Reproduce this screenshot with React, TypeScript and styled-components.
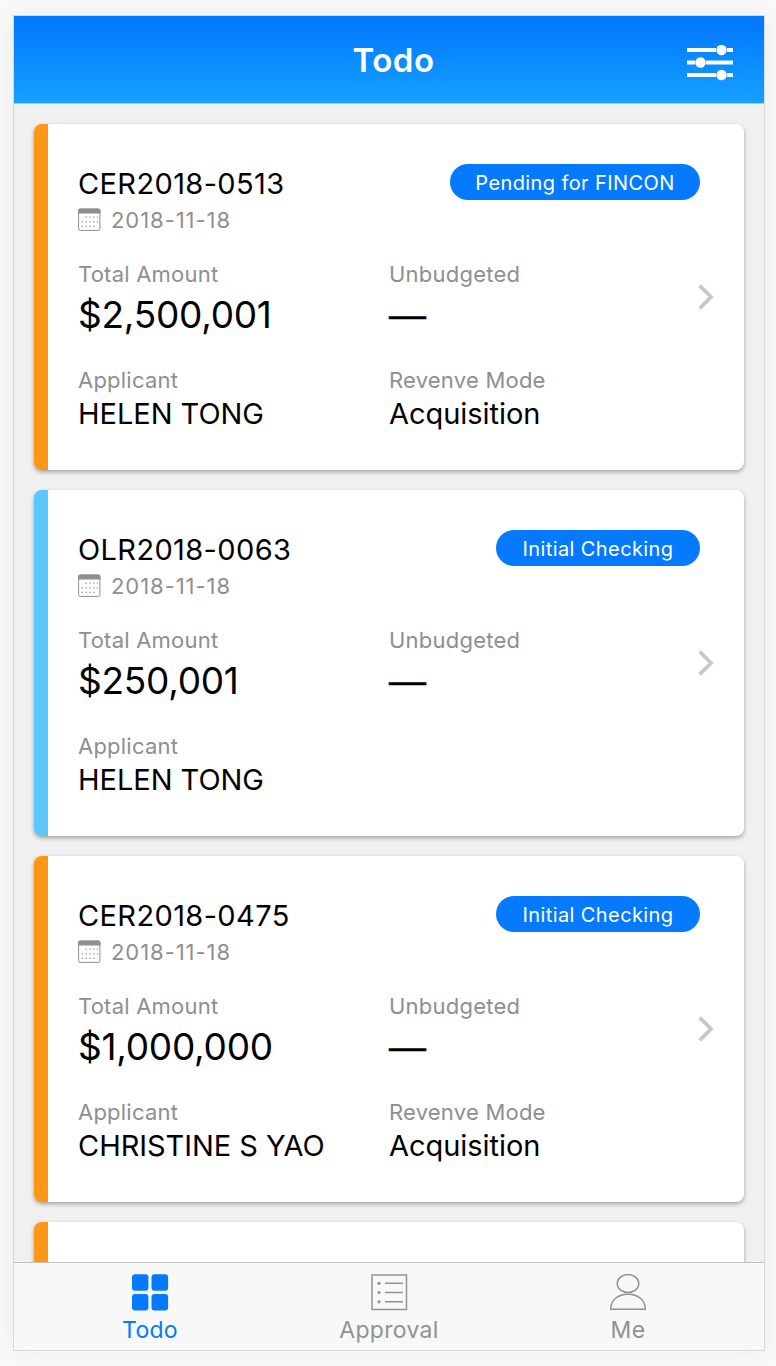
import React from 'react';
import styled, { createGlobalStyle } from 'styled-components';

const GlobalStyle = createGlobalStyle`
  * { box-sizing: border-box; }
  body {
    margin: 0;
    background: #f9f9f9;
    font-family: Inter, "Liberation Sans", sans-serif;
    color: #000;
  }
`;

const Page = styled.div`
  height: 1366px;
  padding: 15px 11px 15px 13px;
  overflow: hidden;
`;

const Phone = styled.main`
  height: 1336px;
  display: flex;
  flex-direction: column;
  border: 1px solid #d8d8d8;
  background: #f0f0f0;
  box-shadow: 0 0 24px rgba(0, 0, 0, 0.06);
`;

const Header = styled.header`
  flex: none;
  height: 88px;
  display: grid;
  grid-template-columns: 1fr auto 1fr;
  align-items: center;
  padding: 0 31px;
  border-bottom: 1px solid #b9c6d2;
  background: linear-gradient(#037aff 12%, #16a0ff 100%);
`;

const Title = styled.h1`
  grid-column: 2;
  margin: 0 0 0 9px;
  color: #fff;
  font-size: 33px;
  font-weight: 600;
  line-height: 44px;
  letter-spacing: 0.5px;
`;

const FilterButton = styled.button`
  justify-self: end;
  display: flex;
  padding: 6px 0 0;
  border: 0;
  background: none;
`;

const List = styled.section`
  flex: 1;
  min-height: 0;
  overflow: hidden;
  display: flex;
  flex-direction: column;
  gap: 20px;
  padding: 20px 20px 0 20px;
`;

const Card = styled.article<{ $accent: string }>`
  flex: none;
  height: 346px;
  display: flex;
  align-items: center;
  padding-right: 30px;
  border-left: 14px solid ${(p) => p.$accent};
  border-radius: 8px;
  background: #fff;
  box-shadow: 0 2px 4px rgba(0, 0, 0, 0.33);
`;

const CardBody = styled.div`
  flex: 1;
  height: 346px;
  padding: 40px 0 0 30px;
`;

const CardTop = styled.div`
  display: flex;
  justify-content: space-between;
  height: 39px;
  margin-right: -2px;
`;

const Code = styled.h2`
  margin: 0;
  font-size: 29px;
  font-weight: 400;
  line-height: 39px;
  letter-spacing: 0.38px;
`;

const Status = styled.span<{ $width: number }>`
  width: ${(p) => p.$width}px;
  height: 36px;
  border-radius: 18px;
  background: #067aff;
  color: #fff;
  font-size: 20px;
  line-height: 38px;
  letter-spacing: 0.4px;
  text-align: center;
`;

const DateLine = styled.div`
  display: flex;
  align-items: center;
  gap: 10px;
  height: 34px;
  color: #8e8e93;
  font-size: 22px;
  letter-spacing: 0.95px;

  svg { margin-top: -1px; }
`;

const Fields = styled.dl`
  display: grid;
  grid-template-columns: 311px 1fr;
  grid-template-rows: 81px 67px;
  row-gap: 25px;
  margin: 23px 0 0;
`;

const Label = styled.dt`
  color: #8e8e93;
  font-size: 22px;
  line-height: 28px;
  letter-spacing: 0.22px;
  white-space: nowrap;
`;

const Value = styled.dd<{ $large?: boolean }>`
  margin: 0;
  font-size: ${(p) => (p.$large ? 37 : 29)}px;
  line-height: ${(p) => (p.$large ? 53 : 39)}px;
  letter-spacing: ${(p) => (p.$large ? -0.25 : -0.04)}px;
  white-space: nowrap;
`;

const EmptyValue = styled.dd`
  margin: 0;
  font-family: "Liberation Sans", sans-serif;
  font-size: 37px;
  line-height: 53px;
  -webkit-text-stroke: 0.6px #000;
`;

const TabBar = styled.nav`
  flex: none;
  height: 88px;
  display: grid;
  grid-template-columns: repeat(3, 239px);
  justify-content: center;
  border-top: 1px solid #bfbfbf;
  background: #f8f8f8;
`;

const Tab = styled.a<{ $active?: boolean }>`
  display: flex;
  flex-direction: column;
  align-items: center;
  padding: 11px 0 0;
  color: ${(p) => (p.$active ? '#067aff' : '#929292')};
  font-size: 23px;
  line-height: 38px;
  letter-spacing: 0.3px;

  svg { flex: none; }
`;

const FilterIcon = () => (
  <svg width="46" height="36" viewBox="0 0 46 36" fill="#fff">
    <path d="M0 3h29v4H0zM40 3h6v4h-6zM0 15.5h8v4H0zM19 15.5h27v4H19zM0 28h29v4H0zM40 28h6v4h-6z" />
    <circle cx="34.5" cy="5" r="5.2" />
    <circle cx="13.5" cy="17.5" r="5.2" />
    <circle cx="34.5" cy="30" r="5.2" />
  </svg>
);

const CalendarIcon = () => (
  <svg width="23" height="24" viewBox="0 0 23 24" fill="none">
    <g transform="translate(0 0.5)">
      <rect x="0.6" y="0.6" width="21.3" height="21.3" rx="1.8" stroke="#8e8e93" />
      <path d="M0 5V2Q0 0 2 0H20.5Q22.5 0 22.5 2V5Z" fill="#8e8e93" />
      <path d="M7.5 8.7H20M3.7 13.3H20M3.7 17.8H17" stroke="#8e8e93" strokeWidth="1.3" strokeDasharray="1.3 2.5" />
    </g>
  </svg>
);

const Chevron = () => (
  <svg width="16" height="26" viewBox="0 0 16 26" fill="none" stroke="#c7c7cc" strokeWidth="3.8">
    <path d="M1.7 1.7L13 13L1.7 24.3" />
  </svg>
);

const GridIcon = () => (
  <svg width="37" height="37" viewBox="0.5 0 37 37" fill="currentColor">
    <rect x="0.5" y="0.2" width="16.4" height="16.6" rx="3" />
    <rect x="20" y="0.2" width="16.6" height="16.6" rx="3" />
    <rect x="0.5" y="20" width="16.4" height="16.6" rx="3" />
    <rect x="20" y="20" width="16.6" height="16.6" rx="3" />
  </svg>
);

const ListIcon = () => (
  <svg width="37" height="37" viewBox="0 0 37 37" fill="none" stroke="currentColor" strokeWidth="1.5">
    <rect x="1" y="1" width="34.5" height="34.5" />
    <path d="M14 9.3H32M14 18.5H32M14 27.8H32" />
    <g fill="currentColor" stroke="none">
      <circle cx="8" cy="9.3" r="1.6" />
      <circle cx="8" cy="18.5" r="1.6" />
      <circle cx="8" cy="27.8" r="1.6" />
    </g>
  </svg>
);

const PersonIcon = () => (
  <svg width="37" height="37" viewBox="0.5 0 37 37" fill="none" stroke="#8e8e93" strokeWidth="1.4">
    <ellipse cx="18.5" cy="9.5" rx="10.8" ry="9" />
    <path d="M1.2 35.3C1.2 26 8.5 20.3 18.5 20.3S35.8 26 35.8 35.3Z" />
  </svg>
);

interface Request {
  code: string;
  status: string;
  pill: number;
  amount: string;
  applicant: string;
  mode?: string;
  accent: string;
}

const ORANGE = '#ff9716';
const SKY = '#5ac8fa';

const requests: Request[] = [
  { code: 'CER2018-0513', status: 'Pending for FINCON', pill: 250, amount: '$2,500,001', applicant: 'HELEN TONG', mode: 'Acquisition', accent: ORANGE },
  { code: 'OLR2018-0063', status: 'Initial Checking', pill: 204, amount: '$250,001', applicant: 'HELEN TONG', accent: SKY },
  { code: 'CER2018-0475', status: 'Initial Checking', pill: 204, amount: '$1,000,000', applicant: 'CHRISTINE S YAO', mode: 'Acquisition', accent: ORANGE },
];

const RequestCard = ({ item }: { item: Request }) => (
  <Card $accent={item.accent}>
    <CardBody>
      <CardTop>
        <Code>{item.code}</Code>
        <Status $width={item.pill}>{item.status}</Status>
      </CardTop>
      <DateLine>
        <CalendarIcon />
        2018-11-18
      </DateLine>
      <Fields>
        <div>
          <Label>Total Amount</Label>
          <Value $large>{item.amount}</Value>
        </div>
        <div>
          <Label>Unbudgeted</Label>
          <EmptyValue>—</EmptyValue>
        </div>
        <div>
          <Label>Applicant</Label>
          <Value>{item.applicant}</Value>
        </div>
        {item.mode && (
          <div>
            <Label>Revenve Mode</Label>
            <Value>{item.mode}</Value>
          </div>
        )}
      </Fields>
    </CardBody>
    <Chevron />
  </Card>
);

export default function App() {
  return (
    <Page>
      <GlobalStyle />
      <Phone>
        <Header>
          <Title>Todo</Title>
          <FilterButton aria-label="Filter">
            <FilterIcon />
          </FilterButton>
        </Header>
        <List>
          {requests.map((item) => (
            <RequestCard key={item.code} item={item} />
          ))}
          <Card $accent={ORANGE} />
        </List>
        <TabBar>
          <Tab $active>
            <GridIcon />
            Todo
          </Tab>
          <Tab>
            <ListIcon />
            Approval
          </Tab>
          <Tab>
            <PersonIcon />
            Me
          </Tab>
        </TabBar>
      </Phone>
    </Page>
  );
}
